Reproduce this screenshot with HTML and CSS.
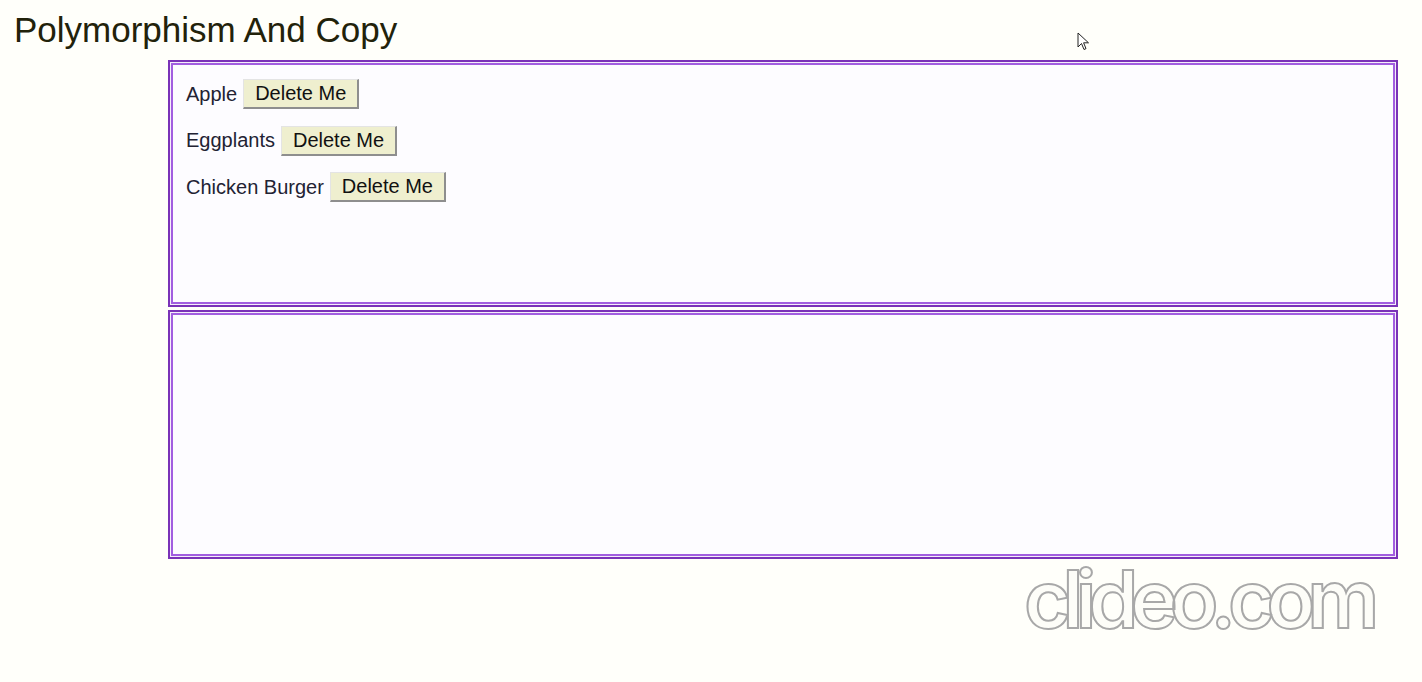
FILE: index.html
```html
<!DOCTYPE html>
<html>
<head>
<meta charset="utf-8">
<title>Polymorphism And Copy</title>
<link rel="stylesheet" href="styles.css">
</head>
<body>
<h1 class="title">Polymorphism And Copy</h1>
<div class="boxes">
  <div class="box">
    <div class="item"><span class="name">Apple</span><button class="del">Delete Me</button></div>
    <div class="item"><span class="name">Eggplants</span><button class="del">Delete Me</button></div>
    <div class="item"><span class="name">Chicken Burger</span><button class="del">Delete Me</button></div>
  </div>
  <div class="box"></div>
</div>
<svg class="cursor" width="14" height="20" viewBox="0 0 14 20"><path d="M1 1 L1 15 L4.5 11.5 L7 17.5 L9 16.6 L6.6 10.8 L11.5 10.8 Z" fill="#fff" stroke="#222" stroke-width="1" stroke-linejoin="miter"/></svg>
<div class="watermark">clideo.com</div>
</body>
</html>
```
FILE: styles.css
```css
html, body {
  background: #fffffa;
}
body {
  margin: 8px;
  font-family: "Liberation Sans", Arial, sans-serif;
  color: #222;
}
.title {
  margin: 2px 0 0 6px;
  font-size: 35px;
  font-weight: normal;
  line-height: 40px;
  color: #22220a;
}
.boxes {
  margin: 10px 0 0 160px;
  width: 1230px;
  display: flex;
  flex-direction: column;
  gap: 3px;
}
.box {
  box-sizing: border-box;
  height: 247px;
  border: 2px solid #7a32b8;
  box-shadow: inset 0 0 0 1px #f4eefa, inset 0 0 0 3px #a25ee0;
  padding: 17px 16px;
  display: flex;
  flex-direction: column;
  gap: 16.5px;
  background: #fdfcff;
}
.box + .box {
  height: 249px;
}
.item {
  display: flex;
  align-items: center;
  gap: 6px;
  font-size: 20px;
  height: 30px;
}
.name {
  color: #222233;
}
.del {
  font-family: "Liberation Sans", Arial, sans-serif;
  font-size: 20px;
  color: #111;
  background: #efefcf;
  border-style: solid;
  border-width: 1px 2px 2px 1px;
  border-color: #e4e4e4 #8e8e8e #8e8e8e #e4e4e4;
  padding: 2px 11px 3px 11px;
  height: 30px;
  line-height: 23px;
  margin: 0;
}
.cursor {
  position: absolute;
  left: 1077px;
  top: 32px;
}
.watermark {
  position: absolute;
  left: 1024px;
  top: 550px;
  font-family: Inter, "Open Sans", sans-serif;
  font-size: 80px;
  font-weight: 600;
  letter-spacing: -8px;
  color: #fdfdf8;
  -webkit-text-stroke: 2px #a8a8a8;
}
```
